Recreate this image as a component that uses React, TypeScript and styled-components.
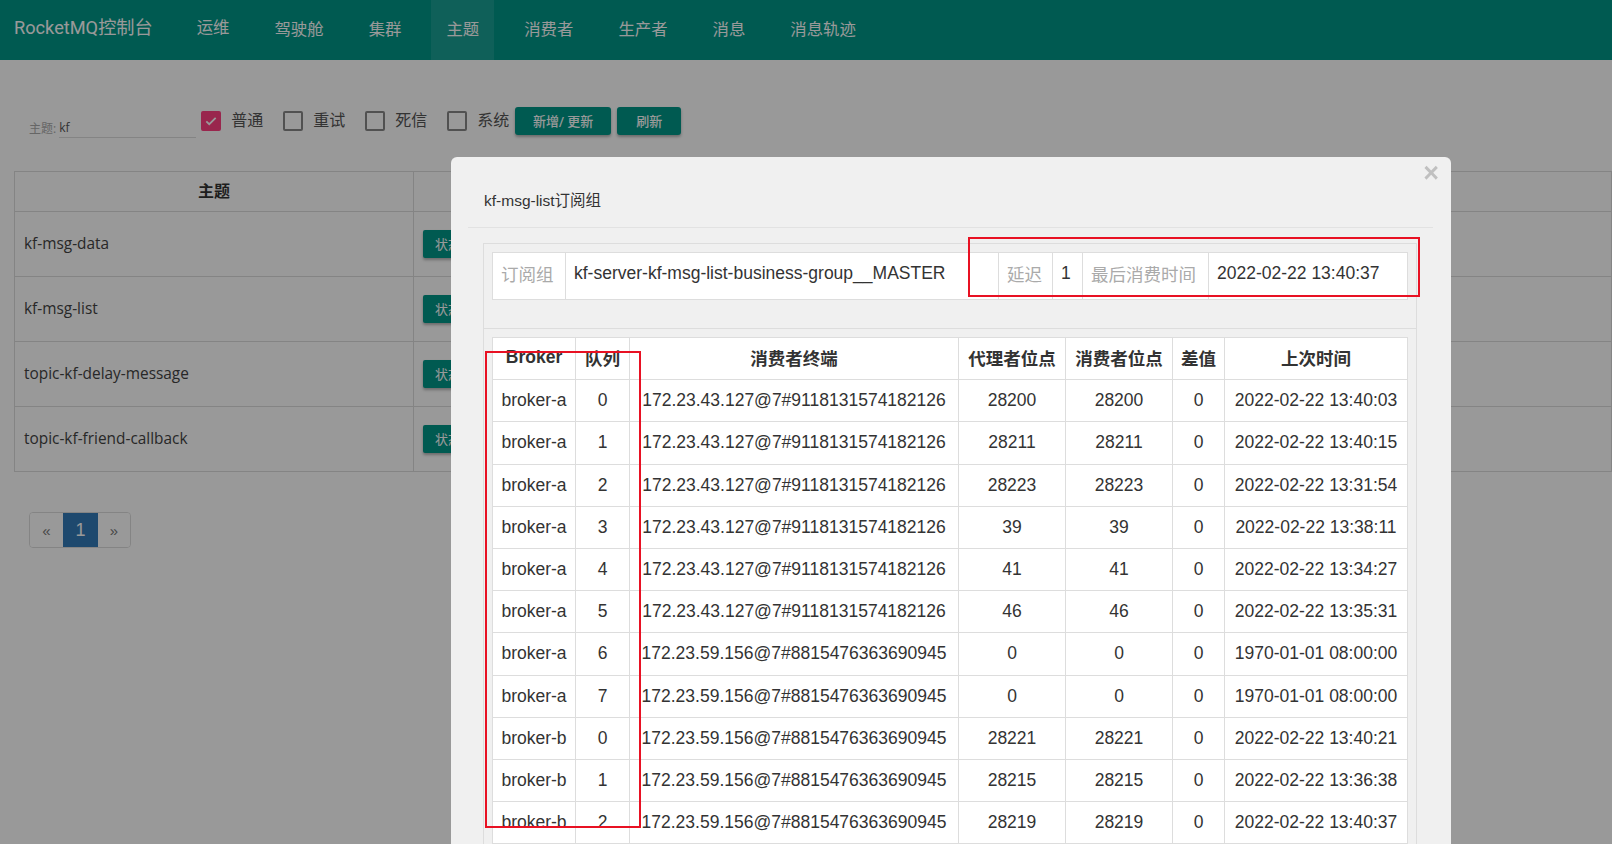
import React from "react";
import styled, { createGlobalStyle } from "styled-components";

const GlobalStyle = createGlobalStyle`
  html, body {
    margin: 0;
    padding: 0;
    overflow: hidden;
    background: #fff;
    font-family: "Open Sans", "Noto Sans CJK SC", sans-serif;
    color: #444;
  }
  * {
    box-sizing: border-box;
  }
`;

const Navbar = styled.nav`
  height: 60px;
  background: #009688;
  display: flex;
  align-items: stretch;
  font-family: Roboto, "Noto Sans CJK SC", sans-serif;
  color: #fff;
`;

const Brand = styled.div`
  display: flex;
  align-items: center;
  padding: 0 0 8px 14px;
  font-size: 18.2px;
  margin-right: 29px;
`;

const NavList = styled.ul`
  display: flex;
  gap: 15px;
  margin: 0;
  padding: 0;
  list-style: none;
`;

const NavItem = styled.li<{ $active?: boolean; $raised?: boolean }>`
  display: flex;
  align-items: center;
  padding: ${(p) => (p.$raised ? "0 15px 9px" : "0 15px 4px")};
  font-size: 16.4px;
  background: ${(p) => (p.$active ? "rgba(255,255,255,0.1)" : "transparent")};
`;

const Toolbar = styled.div`
  display: flex;
  align-items: center;
  height: 28px;
  margin: 47px 0 0 29px;
`;

const Field = styled.label`
  display: flex;
  align-items: flex-end;
  align-self: flex-end;
  margin-bottom: -3px;
  margin-right: 5px;
  font-size: 12px;

  > span {
    color: #aaa;
    padding-bottom: 1px;
  }

  > input {
    width: 137px;
    height: 20px;
    margin-left: 3px;
    border: none;
    border-bottom: 1px solid #ddd;
    background: transparent;
    outline: none;
    font-size: 12px;
    color: #555;
    font-family: inherit;
    padding: 0;
  }
`;

const CheckItem = styled.label`
  display: flex;
  align-items: center;
  gap: 10px;
  margin-right: 20px;
  font-size: 16px;
  color: #555;

  > em {
    font-style: normal;
    padding-bottom: 4px;
  }

  &:last-of-type {
    margin-right: 6px;
  }
`;

const Box = styled.span<{ $checked?: boolean }>`
  width: 20px;
  height: 20px;
  border-radius: 2px;
  border: 2px solid ${(p) => (p.$checked ? "#ff4081" : "#888")};
  background: ${(p) => (p.$checked ? "#ff4081" : "transparent")};
  display: flex;
  align-items: center;
  justify-content: center;
`;

const RaisedButton = styled.button<{ $w: number }>`
  width: ${(p) => p.$w}px;
  height: 28px;
  margin-right: 6px;
  border: none;
  border-radius: 3px;
  background: #009688;
  color: #fff;
  font-size: 13px;
  font-weight: 500;
  font-family: Roboto, "Noto Sans CJK SC", sans-serif;
  box-shadow: 0 2px 3px rgba(0, 0, 0, 0.3);
  padding: 0 0 2px;
`;

const TopicTable = styled.table`
  margin: 36px 0 0 14px;
  width: calc(100% - 14px);
  border-collapse: collapse;
  font-size: 15.4px;

  th, td {
    border: 1px solid #ddd;
  }

  th {
    height: 40px;
    padding: 0 0 3px;
    font-size: 16px;
    font-weight: bold;
    color: #333;
    text-align: center;
  }

  td {
    height: 65px;
    padding: 0 9px 1px;
  }

  td:first-child {
    width: 399px;
  }
`;

const SmallButton = styled.button`
  height: 28px;
  padding: 0 12px;
  border: none;
  border-radius: 2px;
  background: #009688;
  color: #fff;
  font-size: 13px;
  font-family: Roboto, "Noto Sans CJK SC", sans-serif;
  box-shadow: 0 2px 3px rgba(0, 0, 0, 0.3);
  white-space: nowrap;
`;

const Pagination = styled.ul`
  display: inline-flex;
  margin: 40px 0 0 29px;
  padding: 0;
  list-style: none;
  border: 1px solid #ddd;
  border-radius: 4px;
  overflow: hidden;
`;

const PageItem = styled.li<{ $active?: boolean; $w: number }>`
  width: ${(p) => p.$w}px;
  height: 34px;
  display: flex;
  align-items: center;
  justify-content: center;
  font-size: ${(p) => (p.$active ? "18px" : "15px")};
  color: ${(p) => (p.$active ? "#fff" : "#777")};
  background: ${(p) => (p.$active ? "#337ab7" : "#fff")};
  font-family: "Liberation Sans", sans-serif;
`;

const Backdrop = styled.div`
  position: fixed;
  inset: 0;
  background: rgba(0, 0, 0, 0.4);
  z-index: 10;
`;

const ModalLayer = styled.div`
  position: fixed;
  inset: 0;
  z-index: 20;
  padding: 157px 0 0 451px;
`;

const Dialog = styled.div`
  position: relative;
  width: 1000px;
  background: #f0f0f0;
  border-radius: 6px;
  font-family: "Liberation Sans", "Noto Sans CJK SC", sans-serif;
  color: #333;
`;

const Close = styled.span`
  position: absolute;
  right: 12px;
  top: 3px;
  font-size: 27px;
  font-weight: bold;
  line-height: 1;
  color: #000;
  opacity: 0.2;
`;

const ModalHeader = styled.div`
  margin: 0 18px 0 17px;
  padding: 33px 16px 15px;
  border-bottom: 1px solid #e2e2e2;
  font-size: 15.5px;
  line-height: 22px;
`;

const ModalBody = styled.div`
  padding: 15px 34px 60px 32px;
`;

const Panel = styled.div`
  border: 1px solid #ddd;
`;

const PanelHeading = styled.div`
  padding: 8px 8px 28px;
  border-bottom: 1px solid #ddd;
`;

const PanelBody = styled.div`
  padding: 8px;
`;

const InfoTable = styled.table`
  width: 100%;
  border-collapse: collapse;
  background: #fff;
  font-size: 17.5px;

  td {
    height: 47px;
    border: 1px solid #ddd;
    padding: 0 8px 5px;
    white-space: nowrap;
  }
`;

const InfoLabel = styled.td`
  color: #aaa;
`;

const ConsumeTable = styled.table`
  width: 100%;
  border-collapse: collapse;
  background: #fff;
  font-size: 17.5px;
  table-layout: fixed;

  th, td {
    height: 42.2px;
    border: 1px solid #ddd;
    padding: 0;
    text-align: center;
    white-space: nowrap;
  }

  th {
    font-weight: bold;
    padding-bottom: 3px;
  }
`;

const Mark = styled.div<{ $l: number; $t: number; $w: number; $h: number }>`
  position: absolute;
  left: ${(p) => p.$l}px;
  top: ${(p) => p.$t}px;
  width: ${(p) => p.$w}px;
  height: ${(p) => p.$h}px;
  border: 2px solid #e81123;
  pointer-events: none;
`;

const navItems = ["运维", "驾驶舱", "集群", "主题", "消费者", "生产者", "消息", "消息轨迹"];
const filters = [
  { label: "普通", checked: true },
  { label: "重试", checked: false },
  { label: "死信", checked: false },
  { label: "系统", checked: false },
];
const topics = ["kf-msg-data", "kf-msg-list", "topic-kf-delay-message", "topic-kf-friend-callback"];

const ipA = "172.23.43.127@7#9118131574182126";
const ipB = "172.23.59.156@7#8815476363690945";

const rows: [string, number, string, number, number, number, string][] = [
  ["broker-a", 0, ipA, 28200, 28200, 0, "2022-02-22 13:40:03"],
  ["broker-a", 1, ipA, 28211, 28211, 0, "2022-02-22 13:40:15"],
  ["broker-a", 2, ipA, 28223, 28223, 0, "2022-02-22 13:31:54"],
  ["broker-a", 3, ipA, 39, 39, 0, "2022-02-22 13:38:11"],
  ["broker-a", 4, ipA, 41, 41, 0, "2022-02-22 13:34:27"],
  ["broker-a", 5, ipA, 46, 46, 0, "2022-02-22 13:35:31"],
  ["broker-a", 6, ipB, 0, 0, 0, "1970-01-01 08:00:00"],
  ["broker-a", 7, ipB, 0, 0, 0, "1970-01-01 08:00:00"],
  ["broker-b", 0, ipB, 28221, 28221, 0, "2022-02-22 13:40:21"],
  ["broker-b", 1, ipB, 28215, 28215, 0, "2022-02-22 13:36:38"],
  ["broker-b", 2, ipB, 28219, 28219, 0, "2022-02-22 13:40:37"],
];

const Check = () => (
  <svg width="14" height="14" viewBox="0 0 24 24">
    <path d="M4 12.5l5 5L20 6.5" fill="none" stroke="#fff" strokeWidth="3" />
  </svg>
);

const App = () => {
  return (
    <>
      <GlobalStyle />
      <Navbar>
        <Brand>RocketMQ控制台</Brand>
        <NavList>
          {navItems.map((n, i) => (
            <NavItem key={n} $active={n === "主题"} $raised={i === 0}>
              {n}
            </NavItem>
          ))}
        </NavList>
      </Navbar>

      <Toolbar>
        <Field>
          <span>主题:</span>
          <input type="text" defaultValue="kf" />
        </Field>
        {filters.map((f) => (
          <CheckItem key={f.label}>
            <Box $checked={f.checked}>{f.checked && <Check />}</Box>
            <em>{f.label}</em>
          </CheckItem>
        ))}
        <RaisedButton $w={96}>新增/ 更新</RaisedButton>
        <RaisedButton $w={64}>刷新</RaisedButton>
      </Toolbar>

      <TopicTable>
        <thead>
          <tr>
            <th>主题</th>
            <th>操作</th>
          </tr>
        </thead>
        <tbody>
          {topics.map((t) => (
            <tr key={t}>
              <td>{t}</td>
              <td>
                <SmallButton>状态</SmallButton>
              </td>
            </tr>
          ))}
        </tbody>
      </TopicTable>

      <Pagination>
        <PageItem $w={33}>«</PageItem>
        <PageItem $w={35} $active>
          1
        </PageItem>
        <PageItem $w={32}>»</PageItem>
      </Pagination>

      <Backdrop />
      <ModalLayer>
        <Dialog>
          <Close>×</Close>
          <ModalHeader>kf-msg-list订阅组</ModalHeader>
          <ModalBody>
            <Panel>
              <PanelHeading>
                <InfoTable>
                  <tbody>
                    <tr>
                      <InfoLabel style={{ width: 73 }}>订阅组</InfoLabel>
                      <td style={{ width: 433 }}>kf-server-kf-msg-list-business-group__MASTER</td>
                      <InfoLabel style={{ width: 54 }}>延迟</InfoLabel>
                      <td style={{ width: 30 }}>1</td>
                      <InfoLabel style={{ width: 126 }}>最后消费时间</InfoLabel>
                      <td>2022-02-22 13:40:37</td>
                    </tr>
                  </tbody>
                </InfoTable>
              </PanelHeading>
              <PanelBody>
                <ConsumeTable>
                  <colgroup>
                    <col style={{ width: 83 }} />
                    <col style={{ width: 54 }} />
                    <col style={{ width: 329 }} />
                    <col style={{ width: 107 }} />
                    <col style={{ width: 107 }} />
                    <col style={{ width: 52 }} />
                    <col />
                  </colgroup>
                  <thead>
                    <tr>
                      <th>Broker</th>
                      <th>队列</th>
                      <th>消费者终端</th>
                      <th>代理者位点</th>
                      <th>消费者位点</th>
                      <th>差值</th>
                      <th>上次时间</th>
                    </tr>
                  </thead>
                  <tbody>
                    {rows.map((r) => (
                      <tr key={r[0] + r[1]}>
                        {r.map((c, i) => (
                          <td key={i}>{c}</td>
                        ))}
                      </tr>
                    ))}
                  </tbody>
                </ConsumeTable>
              </PanelBody>
            </Panel>
          </ModalBody>
          <Mark $l={517} $t={80} $w={452} $h={60} />
          <Mark $l={34} $t={194} $w={156} $h={477} />
        </Dialog>
      </ModalLayer>
    </>
  );
};

export default App;
